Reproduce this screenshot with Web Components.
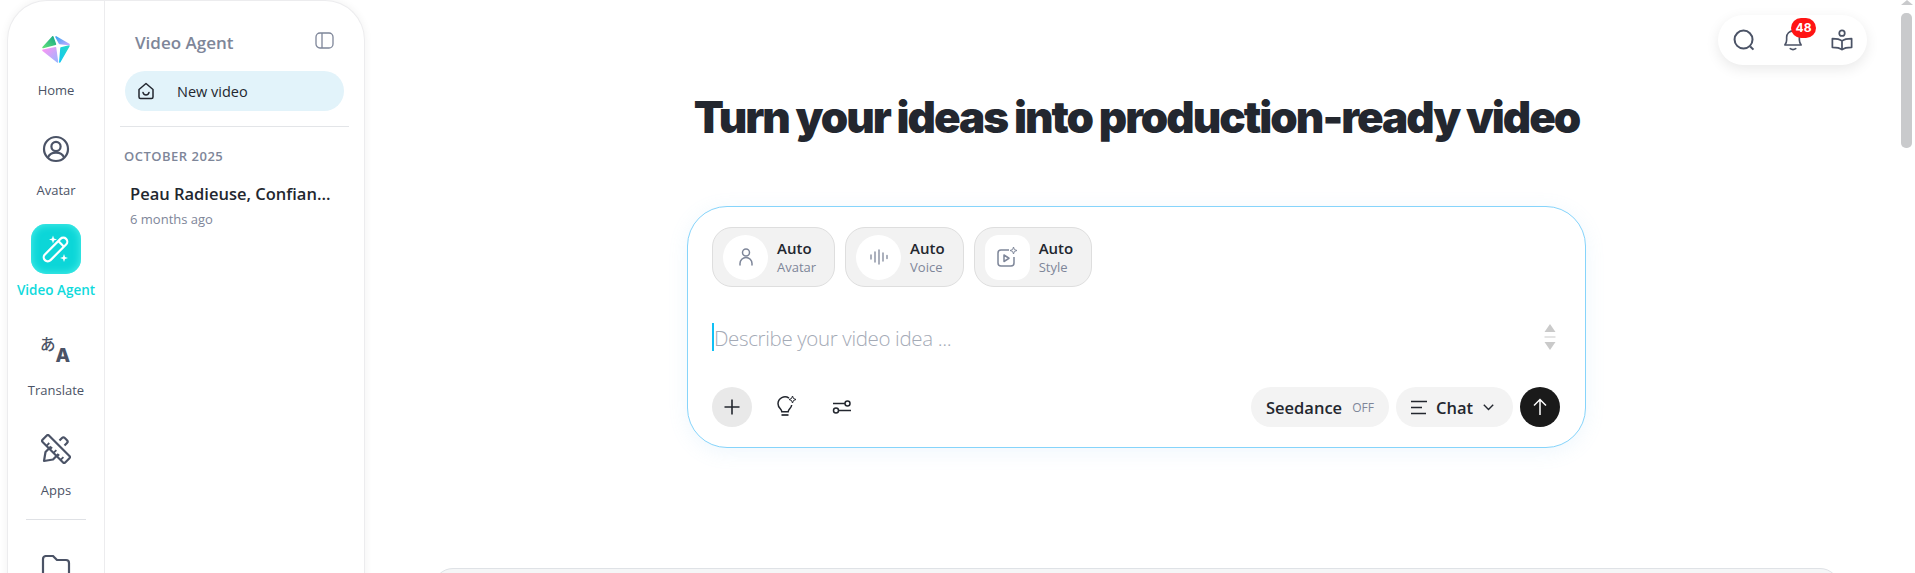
<!DOCTYPE html>
<html>
<head>
<meta charset="utf-8">
<title>Video Agent</title>
<style>
html, body { margin: 0; height: 100%; overflow: hidden; background: #fff; }
body { font-family: "Open Sans", "Noto Sans", sans-serif; color: #23272f; }
</style>
</head>
<body>
<app-shell>
  <side-panel slot="side"></side-panel>
  <top-tools slot="tools"></top-tools>
  <hero-title slot="main">Turn your ideas into production-ready video</hero-title>
  <video-composer slot="main"></video-composer>
  <gallery-panel slot="main"></gallery-panel>
  <fake-scrollbar slot="bar"></fake-scrollbar>
</app-shell>

<script>
const ICONS = {
  avatar: `<svg width="28" height="28" viewBox="0 0 28 28" fill="none" stroke="#4b5366" stroke-width="2.2"><circle cx="14" cy="14" r="12"/><circle cx="14" cy="11.500" r="4.600"/><path d="M5.800 22.800c1.400-3.600 4.400-5.200 8.200-5.200s6.800 1.600 8.200 5.200"/></svg>`,
  wand: `<svg width="32" height="32" viewBox="0 0 32 32" fill="none" stroke="#fff" stroke-width="2.200"><g transform="translate(15.500 16.500) rotate(45)"><rect x="-4" y="-15" width="8" height="30" rx="4"/><path d="M-4-8H4"/></g><path d="M13 2.500l1 3 3 1-3 1-1 3-1-3-3-1 3-1zM24 21l1 3 3 1-3 1-1 3-1-3-3-1 3-1z" fill="#fff" stroke="none"/></svg>`,
  translate: `<svg width="30" height="30" viewBox="0 0 30 30" fill="#4b5366" style="overflow:visible"><text x="-1" y="16" font-family="'Noto Sans CJK JP', sans-serif" font-size="15.500" font-weight="500">あ</text><text x="14.500" y="28" font-family="'Inter', sans-serif" font-size="19" font-weight="800">A</text></svg>`,
  apps: `<svg width="30" height="30" viewBox="0 0 30 30" fill="none" stroke="#4b5366" stroke-width="2.200" stroke-linejoin="round"><g transform="translate(15 15) rotate(-45)"><rect x="-4.500" y="-16" width="9" height="32" rx="1.500"/><path d="M-4.500-9h4M-4.500-4h3M-4.500 1h4M-4.500 6h3M-4.500 11h4" stroke-width="1.800"/></g><path d="M18.500 6.500l2.500-2.500a2 2 0 0 1 2.800 0l2.200 2.200a2 2 0 0 1 0 2.800l-2.500 2.500"/><path d="M10 12.500l-5.500 5.500L3 27l9-1.500 5.500-5.500"/></svg>`,
  folder: `<svg width="30" height="26" viewBox="0 0 30 26" fill="none" stroke="#4b5366" stroke-width="2.200" stroke-linejoin="round"><path d="M2 23V4a3 3 0 0 1 3-3h7l4 4h9a3 3 0 0 1 3 3v15a3 3 0 0 1-3 3H5a3 3 0 0 1-3-3z"/></svg>`,
  logo: `<svg width="30" height="30" viewBox="0 0 30 30"><defs><linearGradient id="g1" x1="0" y1="1" x2="1" y2="0"><stop offset="0" stop-color="#5fe07a"/><stop offset="1" stop-color="#17a886"/></linearGradient><linearGradient id="g2" x1="0" y1="0" x2="1" y2="1"><stop offset="0" stop-color="#ff93f2"/><stop offset="1" stop-color="#9cb6ff"/></linearGradient><linearGradient id="g3" x1="1" y1="0" x2="0" y2="1"><stop offset="0" stop-color="#28d8c8"/><stop offset="1" stop-color="#10c8f0"/></linearGradient><linearGradient id="g4" x1="0" y1="0" x2="1" y2="1"><stop offset="0" stop-color="#39a6f5"/><stop offset="1" stop-color="#c2a8ff"/></linearGradient></defs><g stroke-width="1.500" stroke-linejoin="round"><path d="M11.800 2.800L2 13.500l12.500-3.300z" fill="url(#g1)" stroke="url(#g1)"/><path d="M2 16.300l12.500-2.600 2 14.300z" fill="url(#g2)" stroke="url(#g2)"/><path d="M20 14l8-2-9.200 16z" fill="url(#g3)" stroke="url(#g3)"/><path d="M15 2.800l13 7.700-9.500-1z" fill="url(#g4)" stroke="url(#g4)"/></g></svg>`,
  panel: `<svg width="19" height="19" viewBox="0 0 19 19" fill="none" stroke="#7e8699" stroke-width="1.300"><rect x="1" y="2" width="17" height="15" rx="4"/><path d="M7 2v15"/></svg>`,
  home: `<svg width="18" height="18" viewBox="0 0 18 18" fill="none" stroke="#23272f" stroke-width="1.500" stroke-linejoin="round"><path d="M2 7.500L9 1.500l7 6v7.500a1.500 1.500 0 0 1-1.500 1.500h-11A1.500 1.500 0 0 1 2 15z"/><path d="M6 10.500c.5 1.800 1.700 2.500 3 2.500s2.500-.7 3-2.500" stroke-linecap="round"/></svg>`,
  person: `<svg width="16" height="22" viewBox="0 0 16 22" fill="none" stroke="#7e8699" stroke-width="1.500"><circle cx="8" cy="6.500" r="3.500"/><path d="M2 19v-1.500a6 6 0 0 1 12 0V19" stroke-linecap="round"/></svg>`,
  wave: `<svg width="20" height="16" viewBox="0 0 20 16" fill="none" stroke="#7e8699" stroke-width="1.300" stroke-linecap="round"><path d="M2 6v4M6 3v10M10 1v14M14 4v8M18 6.500v3"/></svg>`,
  style: `<svg width="22" height="22" viewBox="0 0 22 22" fill="none" stroke="#7e8699" stroke-width="1.500" stroke-linejoin="round"><path d="M13 4H5a3 3 0 0 0-3 3v10a3 3 0 0 0 3 3h10a3 3 0 0 0 3-3v-6"/><path d="M8 9v6.500l5-3.250z"/><path d="M17.500 1l.9 2.600 2.600.9-2.600.9-.9 2.600-.9-2.600-2.600-.9 2.600-.9z" stroke-width="1"/></svg>`,
  plus: `<svg width="18" height="18" viewBox="0 0 18 18" stroke="#23272f" stroke-width="1.600"><path d="M9 1.500v15M1.500 9h15"/></svg>`,
  bulb: `<svg width="22" height="24" viewBox="0 0 22 24" fill="none" stroke="#23272f" stroke-width="1.500"><path d="M13 3.200A7 7 0 0 0 2 8.800c0 2.400 1.200 3.800 2.300 5 .8.900 1.400 1.700 1.500 3h6.400c.1-1.300.7-2.100 1.500-3 1.100-1.200 1.800-2.300 2-3.800"/><path d="M5.500 20h7" stroke-width="1.700"/><path d="M16.500 1l1 2.500 2.500 1-2.500 1-1 2.500-1-2.500-2.500-1 2.500-1z" stroke-width="1"/></svg>`,
  sliders: `<svg width="20" height="16" viewBox="0 0 20 16" fill="none" stroke="#23272f" stroke-width="1.500"><path d="M1 4.500h12"/><circle cx="15.500" cy="4.500" r="2.500"/><path d="M7 11.500h12"/><circle cx="4" cy="11.500" r="2.500"/></svg>`,
  lines: `<svg width="17" height="15" viewBox="0 0 17 15" stroke="#23272f" stroke-width="1.500"><path d="M0 1.500h16M0 7.500h11M0 13.500h15"/></svg>`,
  chev: `<svg width="11" height="7" viewBox="0 0 11 7" fill="none" stroke="#23272f" stroke-width="1.400"><path d="M.8.800l4.700 4.700L10.200.8"/></svg>`,
  up: `<svg width="14" height="18" viewBox="0 0 14 18" fill="none" stroke="#fff" stroke-width="1.500"><path d="M7 17V1.500M1 7.500l6-6 6 6"/></svg>`,
  search: `<svg width="22" height="22" viewBox="0 0 24 24" fill="none" stroke="#4b5366" stroke-width="2.200"><circle cx="11.500" cy="11.500" r="9.800"/><path d="M18.800 19l3.500 3.500"/></svg>`,
  bell: `<svg width="20" height="22" viewBox="0 0 22 24" fill="none" stroke="#4b5366" stroke-width="1.800" stroke-linejoin="round"><path d="M2 17.500c1.400-1.600 2-3 2-5.500V9a7 7 0 0 1 14 0v3c0 2.500.6 3.900 2 5.500z"/><path d="M8 21.500c1.800 1.200 4.200 1.200 6 0" stroke-linecap="round"/></svg>`,
  book: `<svg width="22" height="22" viewBox="0 0 24 24" fill="none" stroke="#4b5366" stroke-width="1.900" stroke-linejoin="round"><circle cx="12" cy="4.500" r="3"/><path d="M12 13c-2.500-2-6-2.500-10.500-2.500V20c4 0 8 .5 10.500 2.500 2.500-2 6.500-2.500 10.500-2.500v-9.500C18 10.500 14.500 11 12 13zM12 13v9.500"/></svg>`
};

class AppShell extends HTMLElement {
  constructor() {
    super();
    this.attachShadow({ mode: 'open' }).innerHTML = `
      <style>
        :host { display: flex; height: 573px; overflow: hidden; position: relative; }
        .side { flex: none; padding-left: 7px; }
        .main { flex: 1; min-width: 0; display: flex; flex-direction: column; align-items: center; padding-left: 8px; }
        .tools { position: absolute; top: 15px; right: 48px; }
      </style>
      <div class="side"><slot name="side"></slot></div>
      <div class="main"><slot name="main"></slot></div>
      <div class="tools"><slot name="tools"></slot></div>
      <slot name="bar"></slot>`;
  }
}

class RailItem extends HTMLElement {
  constructor() {
    super();
    const icon = ICONS[this.getAttribute('icon')];
    this.attachShadow({ mode: 'open' }).innerHTML = `
      <style>
        :host { flex: none; display: flex; flex-direction: column; align-items: center; height: 96px; margin-bottom: 4px; color: #4b5366; font-size: 13px; line-height: 18px; font-weight: 500; white-space: nowrap; }
        .ic { flex: none; width: 50px; height: 50px; display: flex; align-items: center; justify-content: center; border-radius: 15px; margin-bottom: 7px; }
        :host([active]) { color: #10dadc; font-size: 13.500px; font-weight: 600; }
        :host([active]) .ic { background: #0cd6d8; box-shadow: inset 0 0 9px #55f0ea; }
      </style>
      <div class="ic">${icon}</div><slot></slot>`;
  }
}

class SidePanel extends HTMLElement {
  constructor() {
    super();
    this.attachShadow({ mode: 'open' }).innerHTML = `
      <style>
        :host { display: flex; width: 358px; height: 600px; box-sizing: border-box; border: 1px solid #ececee; border-bottom: 0; border-radius: 40px 40px 0 0; box-shadow: 0 0 8px rgba(0,0,0,.06); background: #fff; }
        .rail { width: 96px; flex: none; border-right: 1px solid #ececee; padding-top: 23px; display: flex; flex-direction: column; }
        .rail hr { flex: none; width: 60px; border: 0; border-top: 1px solid #dfe1e5; margin: -5px auto 23px; }
        .col { flex: 1; min-width: 0; }
        .head { display: flex; justify-content: space-between; align-items: center; height: 24px; margin-top: 29px; padding: 0 30px 0 30px; color: #7e8699; font-size: 17px; font-weight: 600; }
        .head svg { margin-top: -3px; }
        .new { display: flex; align-items: center; height: 40px; margin: 17px 20px 0; border-radius: 20px; background: #e2f3fa; padding-left: 12px; font-size: 14.500px; font-weight: 500; gap: 22px; }
        hr.line { border: 0; border-top: 1px solid #e3e5e8; margin: 15px 15px 0; }
        .month { margin: 20px 0 0 19px; font-size: 13px; line-height: 18px; font-weight: 600; color: #7e8699; letter-spacing: .5px; }
        .title { margin: 18px 0 0 25px; font-size: 16.500px; line-height: 22px; font-weight: 600; white-space: nowrap; }
        .ago { margin: 5px 0 0 25px; font-size: 13px; line-height: 18px; color: #7e8699; }
      </style>
      <div class="rail">
        <rail-item icon="logo">Home</rail-item>
        <rail-item icon="avatar">Avatar</rail-item>
        <rail-item icon="wand" active>Video Agent</rail-item>
        <rail-item icon="translate">Translate</rail-item>
        <rail-item icon="apps">Apps</rail-item>
        <hr>
        <rail-item icon="folder"></rail-item>
      </div>
      <div class="col">
        <div class="head"><span>Video Agent</span>${ICONS.panel}</div>
        <div class="new">${ICONS.home}<span>New video</span></div>
        <hr class="line">
        <div class="month">OCTOBER 2025</div>
        <div class="title">Peau Radieuse, Confian...</div>
        <div class="ago">6 months ago</div>
      </div>`;
  }
}

class TopTools extends HTMLElement {
  constructor() {
    super();
    this.attachShadow({ mode: 'open' }).innerHTML = `
      <style>
        :host { display: flex; align-items: center; gap: 28px; height: 50px; padding: 0 14px 0 15px; border-radius: 25px; background: #fff; box-shadow: 0 4px 14px rgba(0,0,0,.09); }
        .bell { position: relative; display: flex; }
        .badge { position: absolute; top: -11px; left: 8px; width: 25px; height: 20px; border-radius: 10px; background: #ff1414; color: #fff; font: 700 12px/20px "Inter", sans-serif; text-align: center; }
      </style>
      ${ICONS.search}
      <div class="bell">${ICONS.bell}<span class="badge">48</span></div>
      ${ICONS.book}`;
  }
}

class HeroTitle extends HTMLElement {
  constructor() {
    super();
    this.attachShadow({ mode: 'open' }).innerHTML = `
      <style>
        :host { display: block; flex: none; margin-top: 88px; height: 58px; font: 900 44px/58px "Inter", sans-serif; letter-spacing: -2.020px; color: #23272f; white-space: nowrap; }
      </style><slot></slot>`;
  }
}

class PickChip extends HTMLElement {
  constructor() {
    super();
    const a = this.getAttribute.bind(this);
    this.attachShadow({ mode: 'open' }).innerHTML = `
      <style>
        :host { display: flex; align-items: center; gap: 9px; height: 60px; box-sizing: border-box; padding: 0 18px 0 10px; border: 1px solid #dedede; border-radius: 20px; background: #f2f2f2; }
        .ic { width: 45px; height: 45px; background: #fff; display: flex; align-items: center; justify-content: center; border-radius: 50%; }
        :host([square]) .ic { border-radius: 14px; }
        .t { font-size: 15px; font-weight: 600; line-height: 20px; }
        .s { font-size: 13px; line-height: 18px; color: #7e8699; }
      </style>
      <div class="ic">${ICONS[a('icon')]}</div>
      <div><div class="t">${a('value')}</div><div class="s">${a('label')}</div></div>`;
  }
}

class VideoComposer extends HTMLElement {
  constructor() {
    super();
    this.attachShadow({ mode: 'open' }).innerHTML = `
      <style>
        :host { display: block; flex: none; width: 899px; height: 242px; box-sizing: border-box; margin-top: 60px; padding: 20px 25px 0 24px; border: 1px solid #86d4fb; border-radius: 40px; background: #fff; box-shadow: 0 4px 20px rgba(120,190,240,.12); }
        .chips { display: flex; gap: 10px; }
        .input { display: flex; align-items: center; justify-content: space-between; height: 34px; margin-top: 33px; }
        .ph { border-left: 2px solid #10c0f5; height: 28px; line-height: 30px; font-size: 20.500px; letter-spacing: -.35px; font-weight: 300; color: #a4aab6; white-space: nowrap; }
        .spin { display: flex; margin: 2px 4px 0 0; }
        .row { display: flex; align-items: center; margin-top: 33px; height: 40px; }
        .r { flex: none; width: 40px; height: 40px; display: flex; align-items: center; justify-content: center; border-radius: 50%; }
        .plus { background: #e9e9e9; }
        .left { display: flex; gap: 15px; flex: 1; }
        .pill { flex: none; display: flex; align-items: center; box-sizing: border-box; height: 40px; border-radius: 20px; background: #f3f3f3; font-size: 16.500px; font-weight: 600; padding: 0 15px; margin-right: 7px; }
        .off { font-size: 12px; font-weight: 500; color: #7e8699; margin-left: 10px; }
        .send { background: #1a1a1a; }
      </style>
      <div class="chips">
        <pick-chip icon="person" value="Auto" label="Avatar"></pick-chip>
        <pick-chip icon="wave" value="Auto" label="Voice"></pick-chip>
        <pick-chip icon="style" value="Auto" label="Style" square></pick-chip>
      </div>
      <div class="input">
        <div class="ph">Describe your video idea ...</div>
        <div class="spin"><svg width="12" height="28" viewBox="0 0 12 28" fill="#cacaca"><path d="M6 0l5.500 8H.5zM.5 12.500h11v1H.5zM6 26L.5 18h11z"/></svg></div>
      </div>
      <div class="row">
        <div class="left">
          <div class="r plus">${ICONS.plus}</div>
          <div class="r">${ICONS.bulb}</div>
          <div class="r">${ICONS.sliders}</div>
        </div>
        <div class="pill" style="width:138px">Seedance<span class="off">OFF</span></div>
        <div class="pill" style="width:117px;gap:8px">${ICONS.lines}<span>Chat</span><span style="margin-left:2px;display:flex">${ICONS.chev}</span></div>
        <div class="r send">${ICONS.up}</div>
      </div>`;
  }
}

class GalleryPanel extends HTMLElement {
  constructor() {
    super();
    this.attachShadow({ mode: 'open' }).innerHTML = `
      <style>
        :host { display: block; flex: none; width: 1407px; height: 60px; margin-top: 120px; box-sizing: border-box; border: 1px solid #dfe2e6; border-radius: 20px 20px 0 0; background: #f5f6f7; }
      </style>`;
  }
}

class FakeScrollbar extends HTMLElement {
  constructor() {
    super();
    this.attachShadow({ mode: 'open' }).innerHTML = `
      <style>
        :host { display: block; flex: none; width: 15px; background: #fff; }
        .arrow { display: block; margin-left: 1px; }
        .thumb { width: 11px; height: 135px; margin: 8px 0 0 1px; border-radius: 5px; background: #c9cacc; }
      </style>
      <svg class="arrow" width="12" height="5" viewBox="0 0 12 5" fill="#c9cacc"><path d="M6 0l6 5H0z"/></svg>
      <div class="thumb"></div>`;
  }
}

customElements.define('rail-item', RailItem);
customElements.define('side-panel', SidePanel);
customElements.define('top-tools', TopTools);
customElements.define('hero-title', HeroTitle);
customElements.define('pick-chip', PickChip);
customElements.define('video-composer', VideoComposer);
customElements.define('gallery-panel', GalleryPanel);
customElements.define('fake-scrollbar', FakeScrollbar);
customElements.define('app-shell', AppShell);
</script>
</body>
</html>
